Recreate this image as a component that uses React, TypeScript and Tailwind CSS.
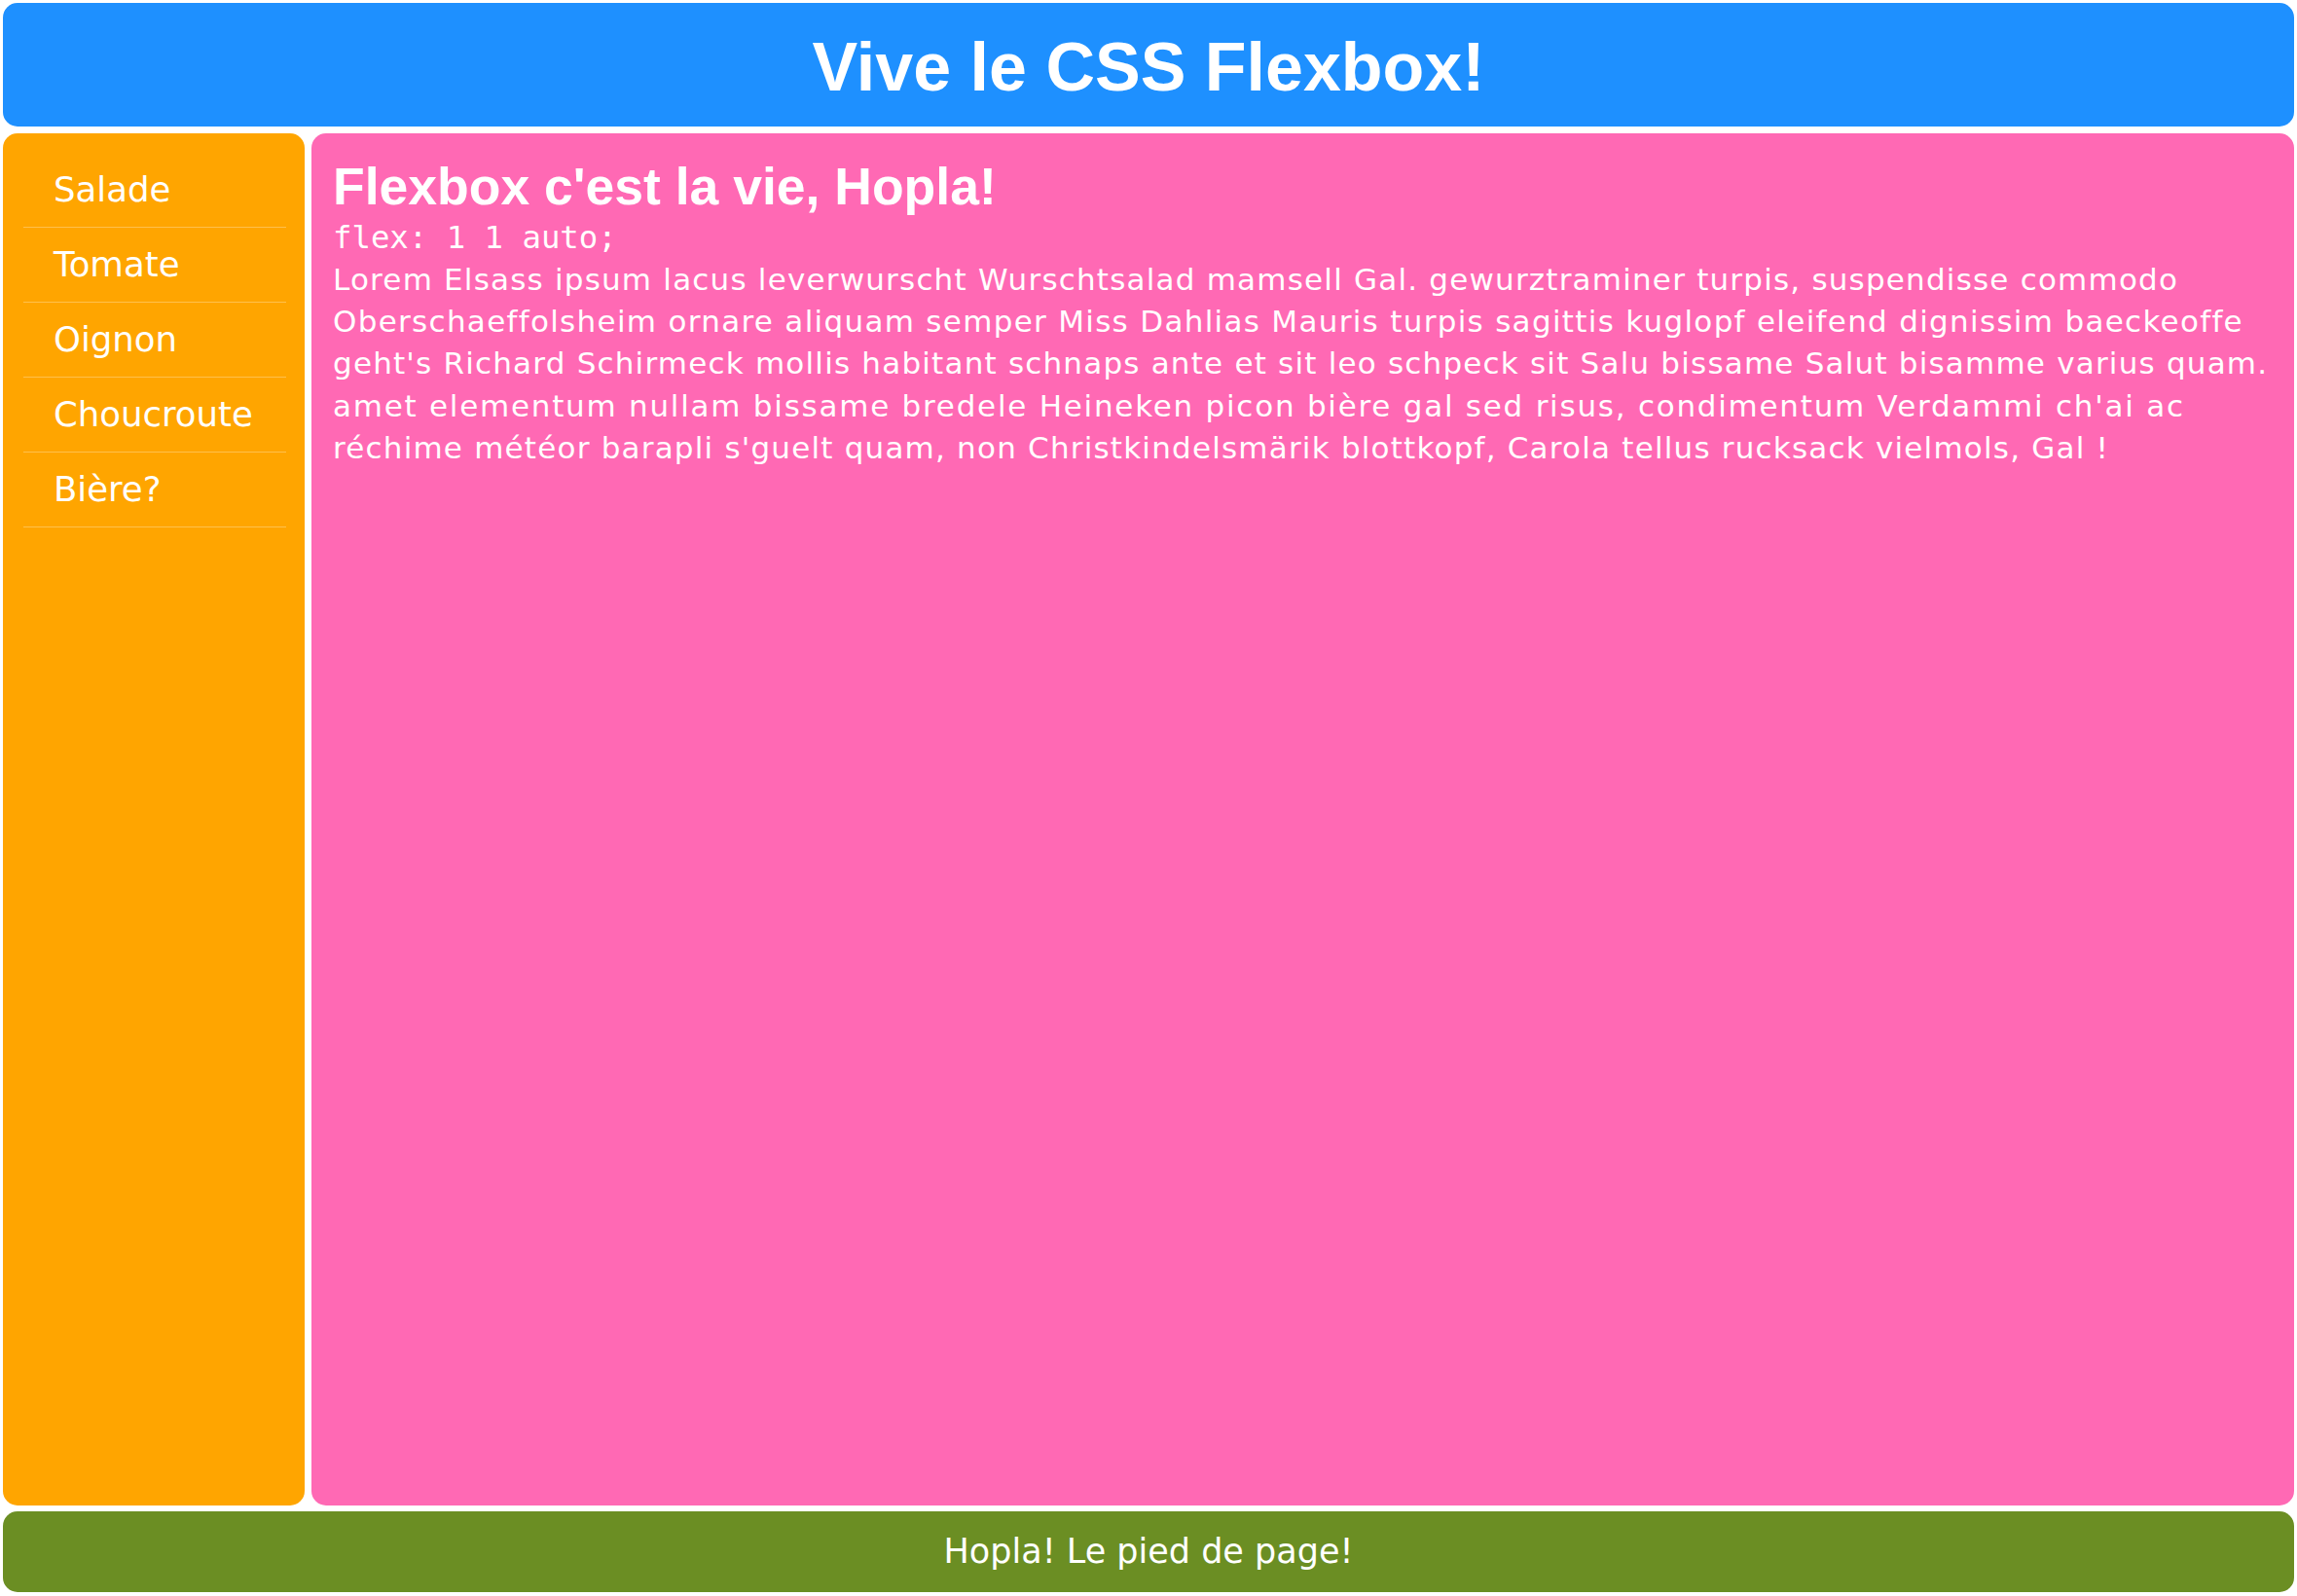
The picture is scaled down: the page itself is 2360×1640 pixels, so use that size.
import React from "react";

const lines: { text: string; cls: string }[] = [
  {
    text: "Lorem Elsass ipsum lacus leverwurscht Wurschtsalad mamsell Gal. gewurztraminer turpis, suspendisse commodo",
    cls: "whitespace-nowrap tracking-[1.2px]",
  },
  {
    text: "Oberschaeffolsheim ornare aliquam semper Miss Dahlias Mauris turpis sagittis kuglopf eleifend dignissim baeckeoffe",
    cls: "whitespace-nowrap tracking-[1.3px]",
  },
  {
    text: "geht's Richard Schirmeck mollis habitant schnaps ante et sit leo schpeck sit Salu bissame Salut bisamme varius quam.",
    cls: "whitespace-nowrap tracking-[1.2px]",
  },
  {
    text: "amet elementum nullam bissame bredele Heineken picon bière gal sed risus, condimentum Verdammi ch'ai ac",
    cls: "whitespace-nowrap tracking-[1.75px]",
  },
  {
    text: "réchime météor barapli s'guelt quam, non Christkindelsmärik blottkopf, Carola tellus rucksack vielmols, Gal !",
    cls: "whitespace-nowrap tracking-[1.2px]",
  },
];

const items = ["Salade", "Tomate", "Oignon", "Choucroute", "Bière?"];

export default function App() {
  return (
    <div className="flex h-[1640px] w-[2360px] flex-col bg-white pt-[3px] pl-[3px] pr-[3px] pb-[4px] text-white [font-family:'DejaVu_Sans',sans-serif]">
      <header className="flex h-[127px] shrink-0 items-center justify-center rounded-[15px] bg-[#1E90FF] pt-[5px]">
        <h1 className="text-[70px] font-bold leading-none [font-family:'Liberation_Sans',Arial,sans-serif]">
          Vive le CSS Flexbox!
        </h1>
      </header>
      <div className="mt-[7px] flex min-h-0 flex-1 gap-[7px]">
        <aside className="w-[310px] shrink-0 rounded-[15px] bg-[#FFA500] pt-[20px] pl-[21px] pr-[19px]">
          <ul>
            {items.map((it) => (
              <li
                key={it}
                className="flex h-[77px] items-center border-b border-white/30 pl-[31px] text-[35.5px]"
              >
                {it}
              </li>
            ))}
          </ul>
        </aside>
        <main className="min-w-0 flex-1 rounded-[15px] bg-[#FF69B4] pt-[25px] pl-[22px]">
          <h2 className="text-[53.5px] font-bold leading-[60px] [font-family:'Liberation_Sans',Arial,sans-serif]">
            Flexbox c'est la vie, Hopla!
          </h2>
          <div className="text-[32.3px] leading-[44px] [font-family:'DejaVu_Sans_Mono',monospace]">
            flex: 1 1 auto;
          </div>
          <div className="text-[31px] leading-[43.2px]">
            {lines.map((l) => (
              <div key={l.text} className={l.cls}>
                {l.text}
              </div>
            ))}
          </div>
        </main>
      </div>
      <footer className="mt-[6px] flex h-[83px] shrink-0 items-center justify-center rounded-[15px] bg-[#6B8E23] text-[35px]">
        Hopla! Le pied de page!
      </footer>
    </div>
  );
}
